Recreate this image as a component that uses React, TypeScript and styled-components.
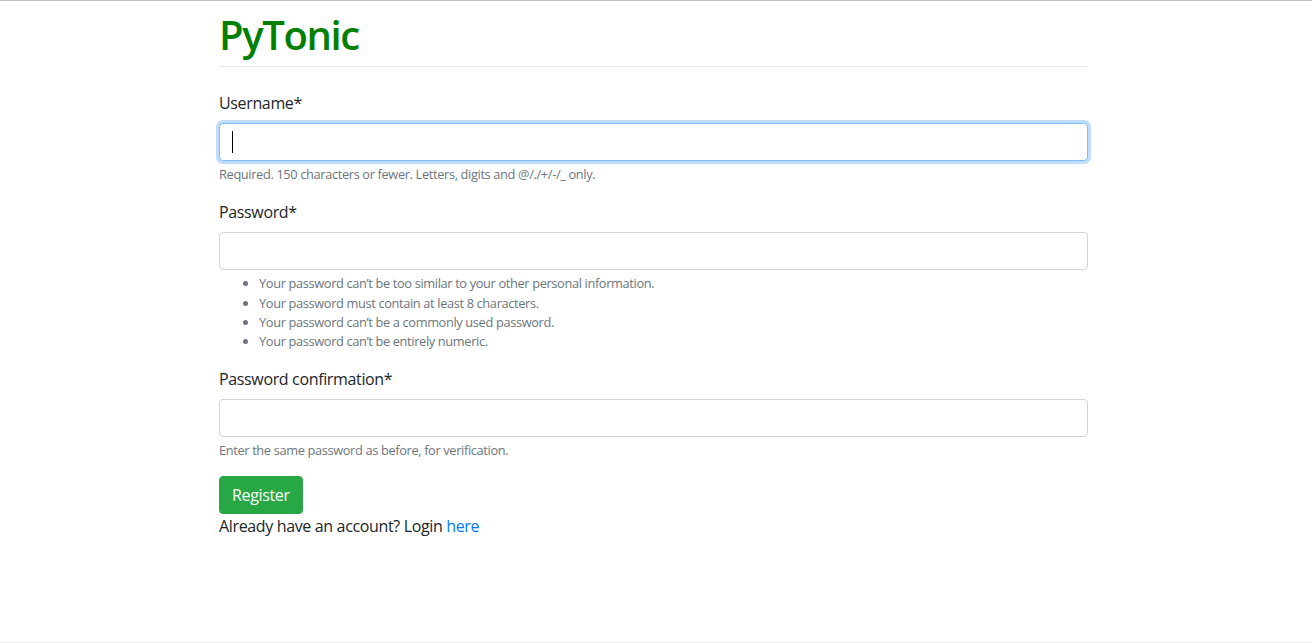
import styled, { createGlobalStyle } from "styled-components";

const GlobalStyle = createGlobalStyle`
    html, body {
        margin: 0;
        padding: 0;
        background: #fff;
    }
    body {
        font-family: "Segoe UI", "Open Sans", "Liberation Sans", sans-serif;
        font-size: 16px;
        line-height: 1.5;
        letter-spacing: -0.022em;
        color: #212529;
    }
    * { box-sizing: border-box; }
`;

const Page = styled.div`
    height: 643px;
    border-top: 1px solid #c3c3c3;
    border-bottom: 1px solid #ececec;
    padding-left: 219px;
`;

const Container = styled.div`
    width: 869px;
`;

const Title = styled.h1`
    margin: 0;
    padding-top: 10px;
    font-size: 40px;
    line-height: 48px;
    font-weight: 600;
    letter-spacing: -0.035em;
    color: #008000;
`;

const Rule = styled.hr`
    margin: 7px 0 24px;
    border: 0;
    border-top: 1px solid rgba(0, 0, 0, 0.1);
`;

const FormGroup = styled.div`
    margin-bottom: 16px;
`;

const Label = styled.label`
    display: block;
    margin-bottom: 8px;
`;

const InputWrap = styled.div`
    position: relative;
`;

const Input = styled.input<{ $focused?: boolean }>`
    display: block;
    width: 100%;
    height: 38px;
    padding: 6px 12px;
    font: inherit;
    color: #495057;
    background: #fff;
    border: 1px solid ${(p) => (p.$focused ? "#80bdff" : "#ced4da")};
    border-radius: 4px;
    outline: none;
    box-shadow: ${(p) => (p.$focused ? "0 0 0 3px rgba(0, 123, 255, 0.25)" : "none")};
`;

const Caret = styled.span`
    position: absolute;
    left: 13px;
    top: 8px;
    width: 1px;
    height: 22px;
    background: #000;
`;

const HelpText = styled.small`
    display: block;
    margin-top: 4px;
    font-size: 12.8px;
    line-height: 19.2px;
    color: #6c757d;
`;

const HelpList = styled.ul`
    margin: 4px 0 -1px;
    padding-left: 40px;
    font-size: 12.8px;
    line-height: 19.4px;
    color: #6c757d;
`;

const Button = styled.button`
    display: inline-block;
    height: 38px;
    padding: 6px 12px;
    font: inherit;
    letter-spacing: inherit;
    color: #fff;
    background: #28a745;
    border: 1px solid #28a745;
    border-radius: 4px;
`;

const Footnote = styled.p`
    margin: 0;
`;

const Link = styled.a`
    color: #007bff;
    text-decoration: none;
`;

export default function App() {
    return (
        <>
            <GlobalStyle />
            <Page>
                <Container>
                    <Title>PyTonic</Title>
                    <Rule />
                    <form onSubmit={(e) => e.preventDefault()}>
                        <FormGroup>
                            <Label htmlFor="id_username">Username*</Label>
                            <InputWrap>
                                <Input id="id_username" type="text" $focused />
                                <Caret />
                            </InputWrap>
                            <HelpText>Required. 150 characters or fewer. Letters, digits and @/./+/-/_ only.</HelpText>
                        </FormGroup>
                        <FormGroup>
                            <Label htmlFor="id_password1">Password*</Label>
                            <Input id="id_password1" type="password" />
                            <HelpList>
                                <li>Your password can’t be too similar to your other personal information.</li>
                                <li>Your password must contain at least 8 characters.</li>
                                <li>Your password can’t be a commonly used password.</li>
                                <li>Your password can’t be entirely numeric.</li>
                            </HelpList>
                        </FormGroup>
                        <FormGroup>
                            <Label htmlFor="id_password2">Password confirmation*</Label>
                            <Input id="id_password2" type="password" />
                            <HelpText>Enter the same password as before, for verification.</HelpText>
                        </FormGroup>
                        <Button type="submit">Register</Button>
                        <Footnote>
                            Already have an account? Login <Link href="#">here</Link>
                        </Footnote>
                    </form>
                </Container>
            </Page>
        </>
    );
}
